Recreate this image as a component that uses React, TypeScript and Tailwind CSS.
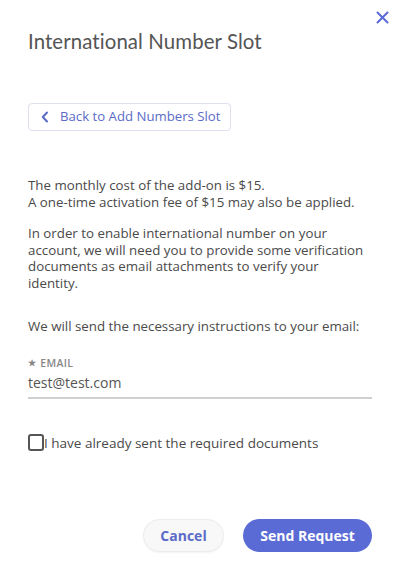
export default function App() {
  return (
    <div className="relative w-[400px] h-[568px] bg-white font-['Open_Sans',sans-serif] text-[#4a4a4a]">
      <button className="absolute right-[10px] top-[9px] w-[16px] h-[16px] flex items-center justify-center text-[#5b6bd5]">
        <svg width="13" height="13" viewBox="0 0 13 13" fill="none" stroke="currentColor" strokeWidth="2" strokeLinecap="round">
          <path d="M1.5 1.5 L11.5 11.5 M11.5 1.5 L1.5 11.5" />
        </svg>
      </button>

      <div className="px-[28px] pt-[28px]">
        <h1 className="text-[20.4px] leading-[26px] text-[#555] font-['Lato',sans-serif] font-normal tracking-[0.1px]">
          International Number Slot
        </h1>

        <button className="mt-[49px] h-[28px] pl-[12px] pr-[10px] flex items-center gap-[11px] border border-[#dde0ee] rounded-[4px] text-[#5b6bc8] text-[13.2px]">
          <svg width="8" height="12" viewBox="0 0 8 12" fill="none" stroke="currentColor" strokeWidth="2" strokeLinecap="round" strokeLinejoin="round">
            <path d="M6 1.5 L1.8 6 L6 10.5" />
          </svg>
          <span>Back to Add Numbers Slot</span>
        </button>

        <div className="mt-[46px] text-[13.3px] leading-[16.5px] text-[#4a4a4a]">
          <p>
            The monthly cost of the add-on is $15.
            <br />
            A one-time activation fee of $15 may also be applied.
          </p>
          <p className="mt-[15px]">
            In order to enable international number on your account, we will need you to provide some verification documents as email attachments to verify your identity.
          </p>
          <p className="mt-[27px]">We will send the necessary instructions to your email:</p>
        </div>

        <div className="mt-[22px]">
          <div className="text-[10.5px] leading-[12px] text-[#888] font-semibold tracking-[0.3px] flex items-center gap-[4px]">
            <span className="text-[9px]">★</span>
            <span>EMAIL</span>
          </div>
          <div className="mt-[4px] pb-[4px] border-b-2 border-[#d0d0d0] text-[14px] leading-[20px] text-[#555]">
            test@test.com
          </div>
        </div>

        <label className="mt-[35px] flex items-center">
          <span className="w-[16px] h-[17px] border-2 border-[#555] rounded-[3px]" />
          <span className="text-[13.5px] leading-[18px] text-[#4a4a4a]">I have already sent the required documents</span>
        </label>

        <div className="mt-[67px] flex justify-end gap-[19px]">
          <button className="h-[33px] w-[81px] rounded-full bg-[#f8f8f8] border border-[#ececec] shadow-[0_1px_2px_rgba(0,0,0,0.05)] text-[#5b6bc8] text-[14px] font-bold">
            Cancel
          </button>
          <button className="h-[33px] w-[129px] rounded-full bg-[#5b6bd5] text-white text-[14px] font-bold">
            Send Request
          </button>
        </div>
      </div>
    </div>
  );
}
